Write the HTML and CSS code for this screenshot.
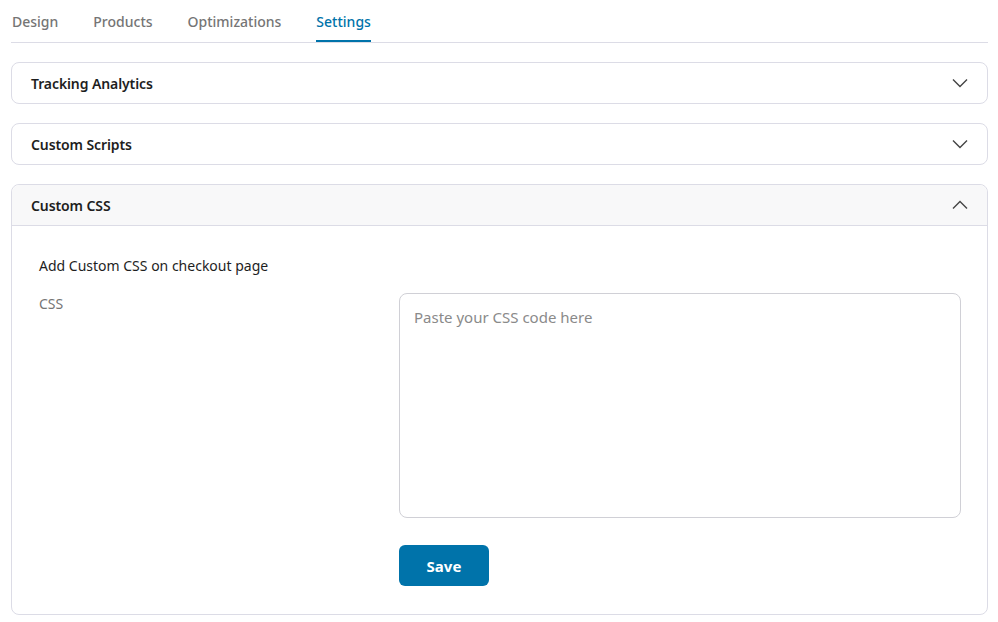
FILE: index.html
```html
<!DOCTYPE html>
<html>
<head>
<meta charset="utf-8">
<link rel="stylesheet" href="styles.css">
</head>
<body>
<div class="page">
  <nav class="tabs">
    <span class="tab">Design</span>
    <span class="tab">Products</span>
    <span class="tab">Optimizations</span>
    <span class="tab active">Settings</span>
  </nav>
  <div class="panels">
    <section class="card">
      <div class="card-head">
        <span class="card-title">Tracking Analytics</span>
        <svg class="chev" width="16" height="10" viewBox="0 0 16 10"><path d="M1 1.5 L8 8.5 L15 1.5" fill="none" stroke="#444" stroke-width="1.4"/></svg>
      </div>
    </section>
    <section class="card">
      <div class="card-head">
        <span class="card-title">Custom Scripts</span>
        <svg class="chev" width="16" height="10" viewBox="0 0 16 10"><path d="M1 1.5 L8 8.5 L15 1.5" fill="none" stroke="#444" stroke-width="1.4"/></svg>
      </div>
    </section>
    <section class="card open">
      <div class="card-head">
        <span class="card-title">Custom CSS</span>
        <svg class="chev" width="16" height="10" viewBox="0 0 16 10"><path d="M1 8.5 L8 1.5 L15 8.5" fill="none" stroke="#444" stroke-width="1.4"/></svg>
      </div>
      <div class="card-body">
        <p class="desc">Add Custom CSS on checkout page</p>
        <div class="field">
          <label class="label">CSS</label>
          <div class="control">
            <textarea class="code" placeholder="Paste your CSS code here"></textarea>
            <button class="save">Save</button>
          </div>
        </div>
      </div>
    </section>
  </div>
</div>
</body>
</html>
```
FILE: styles.css
```css
* { box-sizing: border-box; }
html, body { margin: 0; padding: 0; background: #fff; }
body {
  font-family: "Noto Sans", "Open Sans", "Liberation Sans", sans-serif;
  color: #1e1e1e;
  font-size: 14px;
}
.page { padding: 0 10px 0 11px; }
.tabs {
  display: flex;
  gap: 35px;
  padding-left: 1px;
  border-bottom: 1px solid #dcdce6;
  height: 43px;
}
.tab {
  font-size: 14px;
  font-weight: 500;
  color: #757575;
  padding-top: 12px;
  height: 42px;
}
.tab.active {
  color: #0073aa;
  border-bottom: 2px solid #0073aa;
}
.panels {
  display: flex;
  flex-direction: column;
  gap: 19px;
  padding-top: 19px;
}
.card {
  border: 1px solid #dcdce6;
  border-radius: 8px;
  background: #fff;
}
.card-head {
  height: 40px;
  display: flex;
  align-items: center;
  justify-content: space-between;
  padding: 0 19px 0 19px;
}
.card-title {
  font-size: 14px;
  font-weight: 560;
  color: #1e1e1e;
  letter-spacing: -0.1px;
}
.chev { display: block; }
.card.open .card-head {
  height: 41px;
  background: #f8f8f9;
  border-bottom: 1px solid #dcdce6;
  border-radius: 8px 8px 0 0;
}
.card-body {
  padding: 30px 27px 28px 27px;
}
.desc {
  margin: 0 0 18px 0;
  font-size: 14px;
  color: #1e1e1e;
}
.field {
  display: grid;
  grid-template-columns: 360px 1fr;
}
.label {
  font-size: 14px;
  color: #757575;
  padding-top: 1px;
}
.control {
  display: flex;
  flex-direction: column;
  align-items: flex-start;
  gap: 27px;
}
.code {
  width: 562px;
  height: 225px;
  border: 1px solid #d0d0d6;
  border-radius: 8px;
  padding: 13px 14px;
  font-family: "Noto Sans", "Open Sans", sans-serif;
  font-size: 15px;
  resize: none;
  outline: none;
  margin: 0;
}
.code::placeholder { color: #8a8a8a; }
.save {
  width: 90px;
  height: 41px;
  background: #0073aa;
  color: #fff;
  border: 0;
  border-radius: 6px;
  font-family: "Noto Sans", "Open Sans", sans-serif;
  font-size: 15px;
  font-weight: 700;
}
```
